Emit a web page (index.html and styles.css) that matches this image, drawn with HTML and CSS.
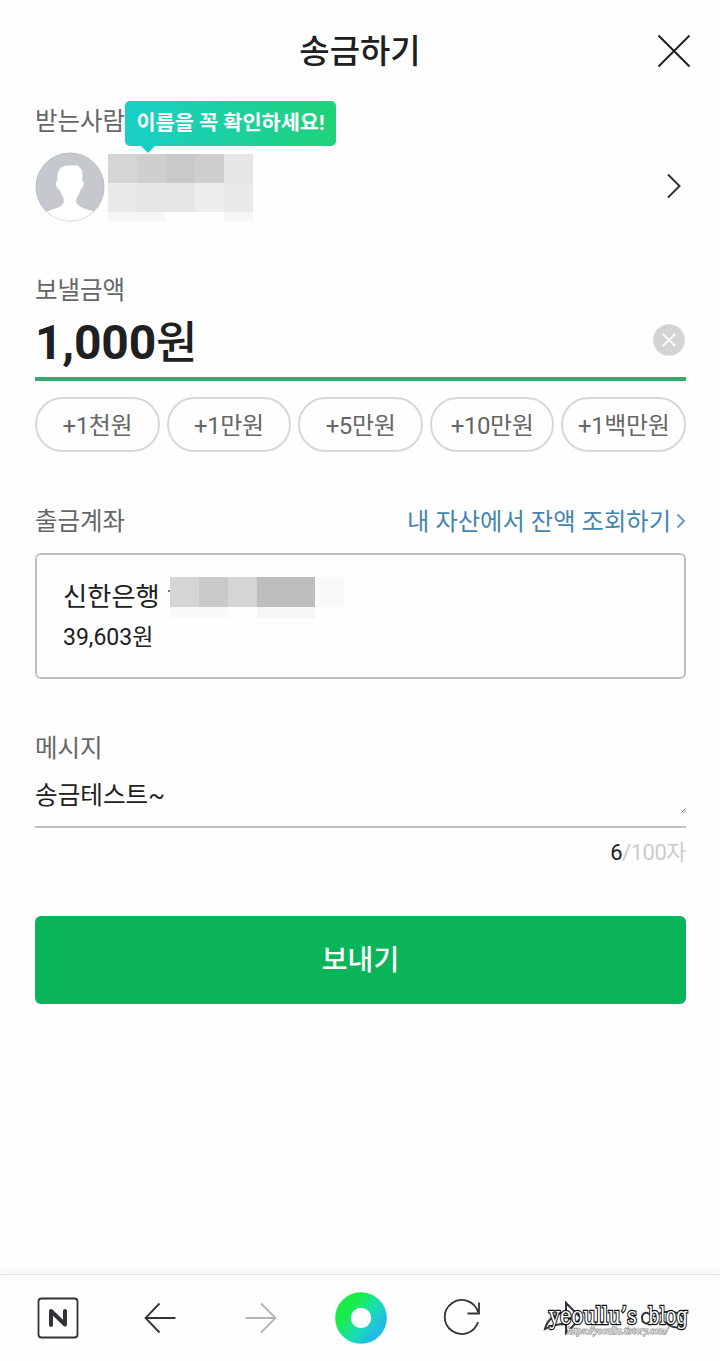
FILE: index.html
```html
<!DOCTYPE html>
<html lang="ko">
<head>
<meta charset="utf-8">
<title>송금하기</title>
<link rel="stylesheet" href="styles.css">
</head>
<body>
<div class="app">
  <header class="header">
    <h1 class="title">송금하기</h1>
    <svg class="close" width="34" height="34" viewBox="0 0 34 34"><path d="M1.500 1.500l31 31M32.500 1.500l-31 31"/></svg>
  </header>
  <main class="content">
    <section class="recipient">
      <div class="label recipient-label">받는사람<div class="tooltip">이름을 꼭 확인하세요!</div></div>
      <div class="person">
        <svg width="70" height="70" viewBox="0 0 70 70">
          <clipPath id="face"><circle cx="35" cy="35" r="34"/></clipPath>
          <circle cx="35" cy="35" r="34" fill="#c5c9ce" stroke="#babfc4"/>
          <path clip-path="url(#face)" fill="#fff" d="M10 60.500C16 57 23 57 27 53C30 50 29 46 26.500 42L24 37C21 36 20 30 22.500 28C21.500 18 26 13.500 34 13.500H43L45 16C48 18 48 23 47 28C50 30 48.500 36 46 37L44 42C41 46 40 50 43 53C47 57 54 57 60 60.500L55 69H15Z"/>
          <path d="M12 60a34 34 0 0 0 46 0" fill="none" stroke="#e5e6e8"/>
        </svg>
        <div class="mosaic name-mosaic">
          <i class="g1"></i><i class="g2"></i><i class="g3"></i><i class="g2"></i><i class="g4"></i>
          <i class="g5"></i><i class="g4"></i><i class="g4"></i><i class="g6"></i><i class="g5"></i>
          <i class="g7"></i><i class="g7"></i><i></i><i></i><i class="g7"></i>
        </div>
        <svg class="chevron" width="16" height="26" viewBox="0 0 16 26"><path d="M2 1.500L13.500 13L2 24.500"/></svg>
      </div>
    </section>
    <section class="amount">
      <div class="label">보낼금액</div>
      <div class="amount-field">
        <span class="amount-value">1,000<span class="won">원</span></span>
        <svg class="clear" width="32" height="32" viewBox="0 0 32 32"><circle cx="16" cy="16" r="15.800"/><path d="M9.800 9.800l12.400 12.400M22.200 9.800L9.800 22.200"/></svg>
      </div>
      <div class="chips">
        <button class="chip">+1천원</button><button class="chip">+1만원</button><button class="chip">+5만원</button><button class="chip">+10만원</button><button class="chip">+1백만원</button>
      </div>
    </section>
    <section class="account">
      <div class="account-head">
        <span class="label">출금계좌</span>
        <a class="balance-link"><span class="link-text">내 자산에서 잔액 조회하기</span><svg width="10" height="16" viewBox="0 0 10 16"><path d="M1.500 1.500L8 8L1.500 14.500"/></svg></a>
      </div>
      <div class="account-box">
        <div class="bank">신한은행<span class="tick"></span>
          <div class="mosaic bank-mosaic">
            <i class="g1"></i><i class="g3"></i><i class="g1"></i><i class="g0"></i><i class="g0"></i><i class="g8"></i>
            <i class="g8"></i><i class="g8"></i><i></i><i class="g7"></i><i class="g7"></i><i></i>
          </div>
        </div>
        <div class="balance">39,603원</div>
      </div>
    </section>
    <section class="message">
      <div class="label">메시지</div>
      <div class="message-field">송금테스트~
        <svg class="grip" width="5" height="5" viewBox="0 0 5 5"><path d="M.5 4.500l4-4M3 4.500l1.500-1.500"/></svg>
      </div>
      <div class="counter"><b>6</b>/100자</div>
    </section>
    <button class="send">보내기</button>
  </main>
  <nav class="toolbar">
    <svg width="720" height="86" viewBox="0 1 720 86" fill="none" stroke="#303338" stroke-width="1.800">
      <defs>
        <linearGradient id="ring" x1=".1" y1=".15" x2=".95" y2=".8"><stop offset=".1" stop-color="#19ec46"/><stop offset=".6" stop-color="#17e0ae"/><stop offset="1" stop-color="#22bde2"/></linearGradient>
      </defs>
      <rect x="38.500" y="24.500" width="39" height="39" rx="3"/>
      <path d="M51 51V37L65 50.500V37" stroke-width="4" stroke-linecap="round" stroke-linejoin="round"/>
      <path d="M175.500 44H146M159.500 29.500L145.500 44L159.500 58.500"/>
      <path stroke="#b4b4b4" d="M245.500 44H275M261 29.500L275.500 44L261 58.500"/>
      <circle cx="361" cy="44" r="18" stroke="url(#ring)" stroke-width="15.600"/>
      <path d="M478 48A17 17 0 1 1 478 38M479 28.500V39.500H467.500"/>
      <path stroke-width="2" d="M566 29V38C555 40 547 46 545 55C552 51 558 50 566 50V59L581 44ZM652 43c-5-7-10-4-10 1s6 9 12 1M654 43c8-8 28-7 30 3s-14 9-18 2"/>
      <g>
        <text x="549" y="49.500" class="mark" textLength="88" lengthAdjust="spacingAndGlyphs">yeoullu’s</text>
        <text x="648" y="49.500" class="mark" textLength="40" lengthAdjust="spacingAndGlyphs">blog</text>
        <text x="567" y="60" class="url" textLength="101" lengthAdjust="spacingAndGlyphs">https://yeoullu.tistory.com/</text>
      </g>
    </svg>
  </nav>
</div>
</body>
</html>
```

FILE: styles.css
```css
* { box-sizing: border-box; }
body { margin: 0; background: #fefefe; color: #202020; font-family: Roboto, "Noto Sans CJK KR", sans-serif; }
button { margin: 0; padding: 0; font-family: inherit; }
.app { display: flex; flex-direction: column; width: 720px; height: 1361px; overflow: hidden; }
.header { display: grid; grid-template-columns: 1fr auto 1fr; align-items: center; height: 101px; padding: 0 29px; flex: none; }
.title { grid-column: 2; margin: 0; padding-top: 2px; font-size: 33px; font-weight: 500; line-height: 40px; }
.close { justify-self: end; fill: none; stroke: #202020; stroke-width: 2; }
.content { flex: 1; display: flex; flex-direction: column; padding: 0 34px 0 35px; }
.label { font-size: 24.500px; line-height: 42px; height: 40px; color: #666; }
.recipient { height: 169px; }
.recipient-label { position: relative; height: 51px; }
.tooltip { position: absolute; left: 90px; top: 0; width: 211px; height: 45px; border-radius: 5px; background: linear-gradient(90deg, #18cfc9, #20d278); color: #fff; font-size: 20.800px; font-weight: 700; line-height: 45px; text-align: center; white-space: nowrap; }
.tooltip::after { content: ""; position: absolute; left: 16px; top: 45px; border: 7px solid transparent; border-top-color: #18cfc5; border-bottom: 0; }
.person { display: flex; height: 70px; }
.mosaic { display: grid; }
.name-mosaic { margin: 2px 0 0 3px; grid-template: 29px 29px 9px / repeat(5, 29px); height: 67px; }
.chevron { margin: 21px 4px 0 auto; fill: none; stroke: #333; stroke-width: 2; }
.g0 { background: #bdbdbd; }
.g1 { background: #d5d5d5; }
.g2 { background: #cfcfcf; }
.g3 { background: #c9c9c9; }
.g4 { background: #e6e6e6; }
.g5 { background: #e9e9e9; }
.g6 { background: #ededed; }
.g7 { background: #f6f6f6; }
.g8 { background: #f9f9f9; }
.amount { height: 231px; }
.amount-field { display: flex; justify-content: space-between; align-items: center; height: 71px; border-bottom: 4px solid #34aa6f; }
.amount-value { font-size: 48px; font-weight: 700; line-height: 67px; margin-top: -2px; letter-spacing: -.2px; }
.won { font-weight: 500; font-size: 45px; }
.clear { margin-right: 1.500px; margin-bottom: 7px; }
.clear circle { fill: #d2d4d5; }
.clear path { stroke: #fff; stroke-width: 1.800; }
.chips { display: flex; gap: 7px; margin-top: 16px; }
.chip { flex: 1; height: 55px; padding-bottom: 2px; border: 2px solid #d8d8d8; border-radius: 28px; background: transparent; color: #666; font-size: 24px; letter-spacing: -.4px; white-space: nowrap; }
.account { height: 227px; }
.account-head { display: flex; justify-content: space-between; height: 52px; }
.balance-link { display: flex; align-items: center; gap: 5px; height: 40px; color: #4486ae; font-size: 24.300px; }
.link-text { padding-bottom: 3px; }
.balance-link svg { fill: none; stroke: #6697b5; stroke-width: 1.800; }
.account-box { height: 126px; padding: 20px 26px; border: 2px solid #bfbfbf; border-radius: 6px; }
.bank { display: flex; height: 42px; font-size: 26.300px; line-height: 45px; }
.tick { width: 2px; height: 2px; margin: 15px 0 0 8px; background: #777; }
.bank-mosaic { margin-top: 2px; grid-template: 30px 11px / repeat(6, 29px); height: 41px; }
.balance { font-size: 23px; line-height: 42px; }
.message { height: 188px; }
.message-field { display: flex; justify-content: space-between; height: 60px; border-bottom: 2px solid #bfbfbf; font-size: 24.600px; line-height: 56px; }
.grip { margin: 40px 0 0; fill: none; stroke: #777; }
.counter { height: 48px; line-height: 49px; text-align: right; color: #ccc; font-size: 22px; letter-spacing: -.5px; }
.counter b { color: #202020; font-weight: 400; }
.send { height: 88px; padding-bottom: 4px; border: 0; border-radius: 6px; background: #0ab55a; color: #fff; font-size: 28px; font-weight: 500; }
.toolbar { flex: none; height: 87px; border-top: 1px solid #dfe1e5; background: #fefefe; box-shadow: 0 -3px 8px #f5f6f8; }
.toolbar svg { display: block; }
.mark { fill: #fff; stroke: #111; stroke-width: 2.600px; paint-order: stroke; font: 25px "DejaVu Serif", serif; }
.url { fill: #fff; stroke: #777; stroke-width: 1px; paint-order: stroke; font: italic 10px "Liberation Serif", serif; }
```
